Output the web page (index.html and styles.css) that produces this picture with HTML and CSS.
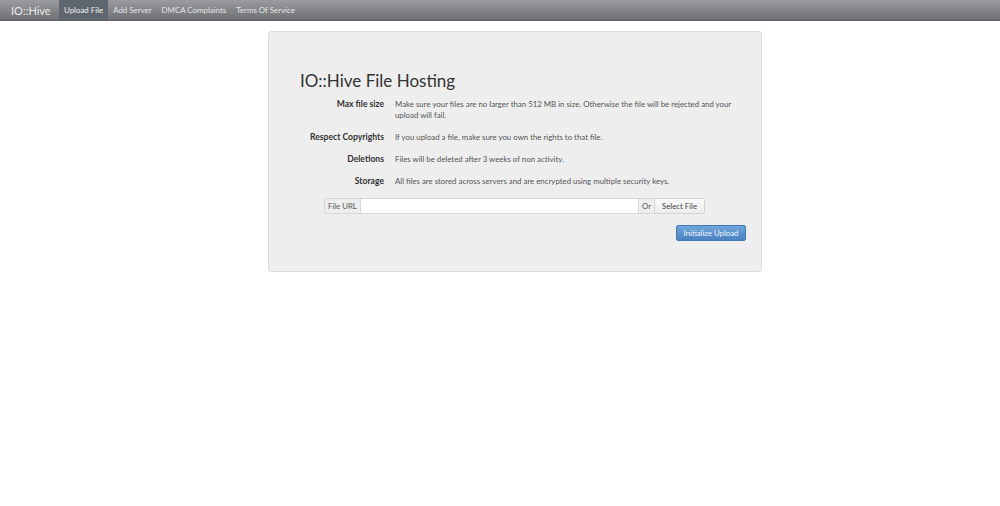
FILE: index.html
```html
<!DOCTYPE html>
<html>
<head>
<meta charset="utf-8">
<link rel="stylesheet" href="styles.css">
</head>
<body>
<nav class="navbar">
  <span class="brand">IO::Hive</span>
  <ul class="nav">
    <li class="active">Upload File</li>
    <li>Add Server</li>
    <li>DMCA Complaints</li>
    <li>Terms Of Service</li>
  </ul>
</nav>
<main class="page">
  <section class="card">
    <h1>IO::Hive File Hosting</h1>
    <dl class="info">
      <dt>Max file size</dt>
      <dd>Make sure your files are no larger than 512 MB in size. Otherwise the file will be rejected and your upload will fail.</dd>
      <dt>Respect Copyrights</dt>
      <dd>If you upload a file, make sure you own the rights to that file.</dd>
      <dt>Deletions</dt>
      <dd>Files will be deleted after 3 weeks of non activity.</dd>
      <dt>Storage</dt>
      <dd>All files are stored across servers and are encrypted using multiple security keys.</dd>
    </dl>
    <div class="input-group">
      <span class="addon">File URL</span>
      <input class="url" type="text">
      <span class="addon">Or</span>
      <button class="btn">Select File</button>
    </div>
    <div class="actions">
      <button class="btn primary">Initialize Upload</button>
    </div>
  </section>
</main>
</body>
</html>
```
FILE: styles.css
```css
* { box-sizing: border-box; }
body {
  margin: 0;
  font-family: Lato, "Noto Sans", sans-serif;
  background: #fff;
  color: #555;
}
.navbar {
  display: flex;
  align-items: stretch;
  height: 21px;
  background: linear-gradient(#9a9c9f, #6d6f73);
  border-bottom: 1px solid #5c5e61;
}
.brand {
  padding: 0 0 0 11px;
  font-size: 11px;
  line-height: 21px;
  color: #eaeaea;
  width: 59px;
}
.nav {
  display: flex;
  margin: 0;
  padding: 0;
  list-style: none;
}
.nav li {
  padding: 0 5px;
  font-size: 7.9px;
  line-height: 21px;
  color: #e4e4e4;
}
.nav li.active {
  background: #5f6670;
  color: #f2f2f2;
}
.page {
  padding: 10px 0 0 268px;
}
.card {
  width: 494px;
  background: #eeeeee;
  border: 1px solid #dcdcdc;
  border-radius: 3px;
  padding: 39px 26px 30px 31px;
}
h1 {
  margin: 0 0 8px;
  font-weight: 400;
  font-size: 17px;
  line-height: 20px;
  color: #333;
}
.info {
  display: grid;
  grid-template-columns: 84px 345px;
  column-gap: 11px;
  row-gap: 11px;
  margin: 0 0 11px;
  font-size: 7.85px;
  line-height: 11px;
}
.info dt {
  text-align: right;
  font-weight: 700;
  font-size: 8.6px;
  color: #333;
}
.info dd {
  margin: 0;
  color: #555;
}
.input-group {
  display: flex;
  height: 16px;
  margin-left: 24px;
  width: 381px;
  font-size: 7.8px;
}
.addon {
  display: flex;
  align-items: center;
  padding: 0 3px;
  background: #eeeeee;
  border: 1px solid #d6d6d6;
  color: #555;
}
.addon:first-child { border-radius: 2px 0 0 2px; border-right: 0; }
.url {
  flex: 1;
  border: 1px solid #d6d6d6;
  background: #fff;
  margin: 0;
  padding: 0;
  height: 16px;
}
.url + .addon { border-left: 0; border-right: 0; }
.btn {
  font-family: inherit;
  font-size: 7.8px;
  height: 16px;
  padding: 0 7px;
  background: linear-gradient(#fbfbfb, #ececec);
  border: 1px solid #d2d2d2;
  border-radius: 0 2px 2px 0;
  color: #444;
  margin: 0;
}
.actions {
  display: flex;
  margin-top: 11px;
  width: 446px;
  justify-content: flex-end;
}
.btn.primary {
  width: 70px;
  padding: 0;
  border-radius: 2px;
  background: linear-gradient(#72a6d9, #4a83c2);
  border-color: #4278b4;
  color: #f0f4fa;
}
```
